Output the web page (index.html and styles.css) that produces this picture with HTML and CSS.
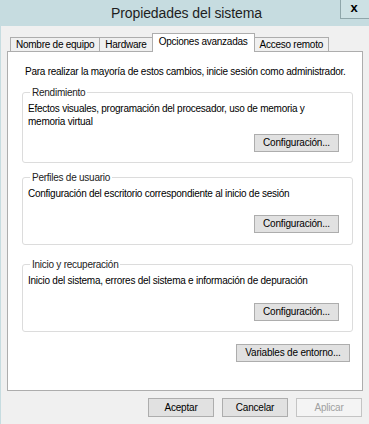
FILE: index.html
```html
<!DOCTYPE html>
<html lang="es">
<head>
<meta charset="utf-8">
<title>Propiedades del sistema</title>
<link rel="stylesheet" href="styles.css">
</head>
<body>
<div class="window">
  <div class="titlebar">
    <div class="title">Propiedades del sistema</div>
    <div class="close">x</div>
  </div>
  <div class="body">
    <div class="tabs">
      <div class="tab">Nombre de equipo</div>
      <div class="tab">Hardware</div>
      <div class="tab active">Opciones avanzadas</div>
      <div class="tab">Acceso remoto</div>
    </div>
    <div class="panel">
      <p class="note">Para realizar la mayoría de estos cambios, inicie sesión como administrador.</p>
      <fieldset class="group g1">
        <legend>Rendimiento</legend>
        <p class="desc">Efectos visuales, programación del procesador, uso de memoria y<br>memoria virtual</p>
        <div class="btnrow"><button class="btn cfg">Configuración...</button></div>
      </fieldset>
      <fieldset class="group g2">
        <legend>Perfiles de usuario</legend>
        <p class="desc">Configuración del escritorio correspondiente al inicio de sesión</p>
        <div class="btnrow"><button class="btn cfg">Configuración...</button></div>
      </fieldset>
      <fieldset class="group g3">
        <legend>Inicio y recuperación</legend>
        <p class="desc">Inicio del sistema, errores del sistema e información de depuración</p>
        <div class="btnrow"><button class="btn cfg">Configuración...</button></div>
      </fieldset>
      <div class="envrow"><button class="btn env">Variables de entorno...</button></div>
    </div>
    <div class="actions">
      <button class="btn act">Aceptar</button>
      <button class="btn act">Cancelar</button>
      <button class="btn act disabled">Aplicar</button>
    </div>
  </div>
</div>
</body>
</html>
```
FILE: styles.css
```css
* { box-sizing: border-box; }
html, body { margin: 0; padding: 0; }
body {
  width: 369px;
  height: 424px;
  overflow: hidden;
  font-family: "Liberation Sans", Arial, sans-serif;
  font-size: 10px;
  letter-spacing: -0.25px;
  color: #000;
}
.window {
  width: 369px;
  height: 424px;
  background: #f0f0f0;
  display: flex;
  flex-direction: column;
}
.titlebar {
  height: 26px;
  background: #c6dce0;
  display: grid;
  grid-template-columns: 1fr;
}
.title {
  grid-area: 1 / 1;
  text-align: center;
  font-size: 14px;
  letter-spacing: -0.1px;
  line-height: 26px;
  color: #1e1e1e;
  padding-left: 4px;
}
.close {
  grid-area: 1 / 1;
  justify-self: end;
  align-self: start;
  width: 29px;
  height: 19px;
  border-left: 1px solid #8fa6aa;
  border-bottom: 1px solid #8fa6aa;
  background: #cde1e4;
  font-weight: bold;
  font-size: 13px;
  letter-spacing: 0;
  line-height: 15px;
  text-align: center;
  padding-right: 2px;
}
.body {
  flex: 1;
  border-left: 1px solid #c6dce0;
  padding: 7px 6px 0 6px;
}
.tabs {
  display: flex;
  align-items: flex-end;
  height: 18px;
  padding-left: 3px;
  position: relative;
  z-index: 1;
}
.tab {
  height: 14px;
  border: 1px solid #adadad;
  border-bottom: none;
  border-right: none;
  background: #f0f0f0;
  padding: 0 5px;
  line-height: 14px;
  white-space: nowrap;
}
.tab:last-child { border-right: 1px solid #adadad; }
.tab.active {
  height: 19px;
  margin-bottom: -1px;
  background: #fff;
  border-right: 1px solid #adadad;
  line-height: 15px;
  padding: 0 6px;
}
.tab.active + .tab { border-left: none; }
.panel {
  height: 340px;
  width: 356px;
  background: #fff;
  border: 1px solid #adadad;
  padding: 13px 9px 0 14px;
  display: flex;
  flex-direction: column;
}
.note {
  margin: 0 0 8px 3px;
  line-height: 13px;
  white-space: nowrap;
}
.group {
  margin: 0;
  padding: 0 13px 10px 5px;
  border: 1px solid #dcdcdc;
  border-radius: 3px;
}
.group legend {
  padding: 0 2px;
  margin-left: 2px;
  line-height: 13px;
  color: #222;
}
.g1 { margin-bottom: 8px; }
.g2 { margin-bottom: 13px; padding-bottom: 11px; }
.desc {
  margin: 3px 0 0 0;
  line-height: 13px;
  white-space: nowrap;
}
.btnrow {
  display: flex;
  justify-content: flex-end;
}
.g1 .btnrow { margin-top: 6px; }
.g2 .btnrow { margin-top: 15px; }
.g3 .btnrow { margin-top: 16px; }
.btn {
  font-family: inherit;
  font-size: 10px;
  letter-spacing: -0.2px;
  color: #000;
  background: #e1e1e1;
  border: 1px solid #adadad;
  border-radius: 0;
  height: 18px;
  padding: 0;
  margin: 0;
  line-height: 16px;
}
.cfg { width: 85px; }
.envrow {
  display: flex;
  justify-content: flex-end;
  padding-right: 3px;
  margin-top: 12px;
}
.env { width: 114px; }
.actions {
  display: flex;
  justify-content: flex-end;
  gap: 8px;
  padding: 7px 1px 0 0;
  width: 356px;
}
.act { width: 66px; height: 19px; }
.disabled {
  background: #f4f4f4;
  border-color: #c4c4c4;
  color: #a0a0a0;
}
```
